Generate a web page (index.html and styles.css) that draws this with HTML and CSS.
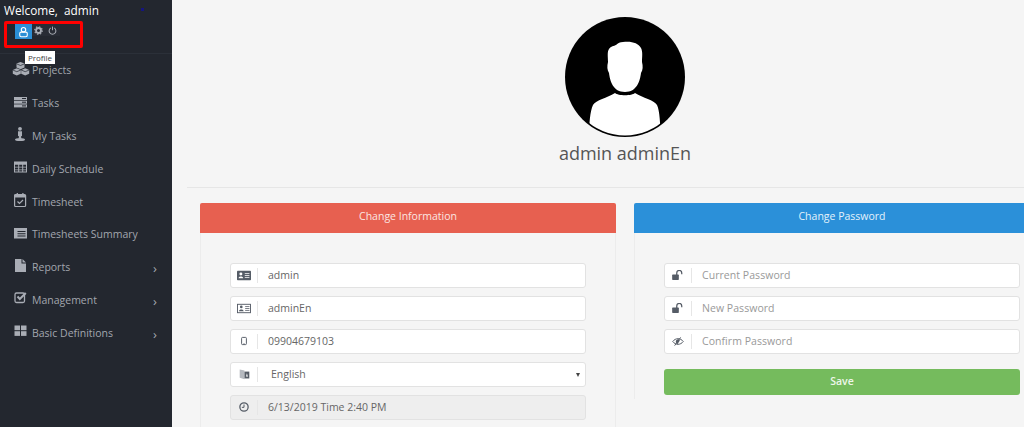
FILE: index.html
```html
<!DOCTYPE html>
<html lang="en">
<head>
<meta charset="utf-8">
<title>Profile</title>
<link rel="stylesheet" href="styles.css">
</head>
<body>
<div class="app">
  <aside class="sidebar">
    <div class="welcome">Welcome,&nbsp; admin</div>
    <span class="dot"></span>
    <div class="tools">
      <span class="tool active"><svg viewBox="0 0 16 16" width="11" height="12"><circle cx="8" cy="4.6" r="3.2" fill="none" stroke="#fff" stroke-width="1.6"/><rect x="2.5" y="8.2" width="11" height="6.6" rx="2" fill="none" stroke="#fff" stroke-width="1.6"/></svg></span>
      <span class="tool gear"><svg viewBox="0 0 16 16" width="9" height="9"><circle cx="8" cy="8" r="4.4" fill="none" stroke="#a9adb5" stroke-width="3.4"/><circle cx="8" cy="8" r="6.8" fill="none" stroke="#a9adb5" stroke-width="2" stroke-dasharray="2.6 2.7"/></svg></span>
      <span class="tool power"><svg viewBox="0 0 16 16" width="9" height="9"><path d="M5 3.4a6 6 0 1 0 6 0" fill="none" stroke="#a9adb5" stroke-width="1.800"/><path d="M8 1v6.5" stroke="#a9adb5" stroke-width="1.800"/></svg></span>
    </div>
    <nav class="menu">
      <a class="item"><svg class="ico" viewBox="0 0 18 16"><path d="M7.500 0l4 1.600v3.800l-4 1.800-4-1.800V1.600z"/><path d="M3.800 6.200l4 1.700v3.900l-4 1.800-4-1.800V7.900z"/><path d="M12.200 6.200l4 1.700v3.900l-4 1.800-4-1.800V7.900z"/><path d="M3.500 1.800l4 1.700 4-1.700M-.2 8l4 1.700 4-1.700M8.200 8l4 1.700 4-1.700" fill="none" stroke="#23272f" stroke-width=".7"/></svg><span class="label">Projects</span></a>
      <a class="item"><svg class="ico" viewBox="0 0 18 16"><rect x="1" y="2" width="13" height="3"/><rect x="1" y="5.700" width="13" height="3"/><rect x="1" y="9.400" width="13" height="3"/><rect x="9" y="3" width="4" height="1" fill="#23272f"/><rect x="9" y="6.700" width="4" height="1" fill="#23272f"/><rect x="9" y="10.400" width="4" height="1" fill="#23272f"/></svg><span class="label">Tasks</span></a>
      <a class="item"><svg class="ico" viewBox="0 0 18 16"><circle cx="7" cy="1.800" r="1.900"/><path d="M5 4.300h4V9H8.200v3H5.800V9H5z"/><ellipse cx="7" cy="12.500" rx="5" ry="1.600"/></svg><span class="label">My Tasks</span></a>
      <a class="item"><svg class="ico" viewBox="0 0 18 16"><path fill-rule="evenodd" d="M1 1.500h13v11H1zM2 4.700v2h3.200v-2zm4.200 0v2h3v-2zm4 0v2h2.800v-2zM2 7.500v2h3.200v-2zm4.200 0v2h3v-2zm4 0v2h2.800v-2zM2 10.300v1.300h3.200v-1.300zm4.200 0v1.300h3v-1.300zm4 0v1.300h2.800v-1.300z"/></svg><span class="label">Daily Schedule</span></a>
      <a class="item"><svg class="ico" viewBox="0 0 18 16"><rect x="1.600" y="1.500" width="11" height="12" rx="1" fill="none" stroke="#a9adb5" stroke-width="1.200"/><path d="M1.600 2h11v2.500h-11z"/><path d="M4.300 0v2.800M9.900 0v2.800" stroke="#a9adb5" stroke-width="1.300"/><path d="M4.500 8.500l2 2 3.500-3.500" fill="none" stroke="#a9adb5" stroke-width="1.200"/></svg><span class="label">Timesheet</span></a>
      <a class="item"><svg class="ico" viewBox="0 0 18 16"><path fill-rule="evenodd" d="M1 2h13v10.500H1zM4.500 5v1h8V5zm0 2.200v1h8v-1zm0 2.200v1h8v-1z"/></svg><span class="label">Timesheets Summary</span></a>
      <a class="item"><svg class="ico" viewBox="0 0 18 16"><path d="M2 0h6.500v4.500H13V13H2zM9.500 0L13 3.500H9.500z"/></svg><span class="label">Reports</span><span class="chev">›</span></a>
      <a class="item"><svg class="ico" viewBox="0 0 18 16"><rect x="2" y="2" width="9.500" height="9.500" rx="1.500" fill="none" stroke="#a9adb5" stroke-width="1.300"/><path d="M4.500 5.500l2.300 2.500 6-6" fill="none" stroke="#a9adb5" stroke-width="2"/></svg><span class="label">Management</span><span class="chev">›</span></a>
      <a class="item"><svg class="ico" viewBox="0 0 18 16"><rect x="1.500" y="1.500" width="5.500" height="4.700"/><rect x="8" y="1.500" width="5.500" height="4.700"/><rect x="1.500" y="7.200" width="5.500" height="4.700"/><rect x="8" y="7.200" width="5.500" height="4.700"/></svg><span class="label">Basic Definitions</span><span class="chev">›</span></a>
    </nav>
    <div class="highlight"></div>
    <div class="tip">Profile</div>
  </aside>
  <main class="main">
    <header class="head">
      <svg class="avatar" viewBox="0 0 120 120">
        <defs><clipPath id="inner"><circle cx="60" cy="60" r="58.500"/></clipPath></defs>
        <circle cx="60" cy="60" r="60" fill="#000"/>
        <g clip-path="url(#inner)">
          <path fill="#fff" d="M24 120c0-12 1-26 4-32 3-5 14-7 22-12 3 3 17 3 20 0 8 5 19 7 22 12 3 6 3 20 4 32z"/>
          <path fill="none" stroke="#000" stroke-width="1.500" d="M48 71c3 3 7 5 12 5s9-2 12-5"/>
          <path fill="#fff" d="M58 25c9-1 15 1 18 6 2 4 1 9 1 14 1 4 1 8-1 11-1 8-4 19-16 19s-15-11-16-19c-2-3-2-7-1-11 0-5-1-10 1-13 2-3 5-3 7-4 2-2 4-3 7-3z"/>
        </g>
      </svg>
      <h1 class="name">admin adminEn</h1>
    </header>
    <hr class="rule">
    <div class="cards">
      <section class="card">
        <h2 class="card-title red">Change Information</h2>
        <div class="card-body">
          <div class="field"><span class="addon"><svg viewBox="0 0 18 14" width="14" height="11"><rect y="1" width="18" height="12" rx="1" fill="#555c66"/><circle cx="5" cy="5.200" r="1.900" fill="#fff"/><path d="M2 10.500c0-3 6-3 6 0z" fill="#fff"/><path d="M10 4.500h6M10 7h6M10 9.500h6" stroke="#fff"/></svg></span><span class="value">admin</span></div>
          <div class="field"><span class="addon"><svg viewBox="0 0 18 14" width="14" height="11"><rect x=".6" y="1.600" width="16.800" height="10.800" fill="none" stroke="#555c66" stroke-width="1.200"/><circle cx="5.500" cy="5" r="1.700" fill="#555c66"/><path d="M2.500 10.500c0-3 6-3 6 0z" fill="#555c66"/><path d="M10.500 4.500h5.500M10.500 7h5.500M10.500 9.500h5.500" stroke="#555c66"/></svg></span><span class="value">adminEn</span></div>
          <div class="field"><span class="addon"><svg viewBox="0 0 10 14" width="6" height="10"><rect x="1" y="1" width="8" height="12" rx="1.500" fill="none" stroke="#555c66" stroke-width="1.600"/><path d="M4 11.300h2" stroke="#555c66"/></svg></span><span class="value">09904679103</span></div>
          <div class="field"><span class="addon"><svg viewBox="0 0 16 16" width="11" height="12"><path fill="#b5b9bf" d="M1 1.500l7 1.500v12.500l-7-2z"/><path fill="#555c66" d="M8 4.500h7v10H8z"/><path fill="#fff" d="M10 12l1.500-5 1.500 5h-1l-.5-1.500-.5 1.500z"/></svg></span><span class="value select">English</span><span class="caret"></span></div>
          <div class="field off"><span class="addon"><svg viewBox="0 0 14 14" width="10" height="10"><circle cx="7" cy="7" r="5.800" fill="none" stroke="#555c66" stroke-width="1.800"/><path d="M7 3.500V7.500H4" fill="none" stroke="#555c66" stroke-width="1.400"/></svg></span><span class="value">6/13/2019 Time 2:40 PM</span></div>
        </div>
      </section>
      <section class="card short">
        <h2 class="card-title blue">Change Password</h2>
        <div class="card-body">
          <div class="field"><span class="addon"><svg viewBox="0 0 14 12" width="12" height="10"><rect x="0" y="5.500" width="8" height="6.500" rx=".8" fill="#555c66"/><path d="M5.500 6V3.500a3 3 0 0 1 6 0V5" fill="none" stroke="#555c66" stroke-width="1.500"/></svg></span><span class="value hint">Current Password</span></div>
          <div class="field"><span class="addon"><svg viewBox="0 0 14 12" width="12" height="10"><rect x="0" y="5.500" width="8" height="6.500" rx=".8" fill="#555c66"/><path d="M5.500 6V3.500a3 3 0 0 1 6 0V5" fill="none" stroke="#555c66" stroke-width="1.500"/></svg></span><span class="value hint">New Password</span></div>
          <div class="field"><span class="addon"><svg viewBox="0 0 16 12" width="12" height="9"><path d="M1 6c3.500-5 10.500-5 14 0-3.500 5-10.500 5-14 0z" fill="none" stroke="#555c66" stroke-width="1.300"/><path d="M5 6.500a3 3 0 0 1 5.500-2L7 10z" fill="#555c66"/><path d="M3.500 11.500l8-11" stroke="#555c66" stroke-width="1.300"/></svg></span><span class="value hint">Confirm Password</span></div>
          <button class="save" type="button">Save</button>
        </div>
      </section>
    </div>
  </main>
</div>
</body>
</html>
```
FILE: styles.css
```css
* { box-sizing: border-box; }
html, body { margin: 0; height: 427px; overflow: hidden; }
body { font-family: "Open Sans", "Noto Sans", sans-serif; background: #f5f5f5; color: #666; }
.app { display: flex; height: 427px; width: 1024px; overflow: hidden; }

.sidebar { position: relative; flex: 0 0 172px; background: #23272f; color: #a9adb5; }
.welcome { padding: 2px 0 0 4px; height: 20px; font-size: 11.800px; line-height: 17px; color: #fff; white-space: nowrap; }
.dot { position: absolute; left: 141px; top: 8px; width: 3px; height: 3px; background: #15157f; }
.tools { display: flex; height: 34px; margin-left: 15px; padding-top: 4px; align-items: flex-start; }
.tool { height: 12px; display: flex; justify-content: center; align-items: center; background: #282c35; }
.tool.active { width: 17px; height: 15px; background: #2b8fd6; }
.tool.gear { width: 13px; }
.tool.power { width: 15px; }
.menu { display: flex; flex-direction: column; border-top: 1px solid #2b3039; margin-top: -1px; }
.item { display: flex; align-items: center; height: 32.800px; padding-left: 13px; font-size: 10.500px; color: #a2a6ae; white-space: nowrap; }
.ico { width: 18px; height: 16px; fill: #a9adb5; flex: none; margin-top: -1px; overflow: visible; }
.label { margin-left: 1px; }
.chev { margin-left: auto; margin-right: 15px; font-size: 13px; line-height: 13px; margin-top: 3px; }
.highlight { position: absolute; left: 4px; top: 21px; width: 79px; height: 27px; border: 3px solid #f00; border-radius: 2px; }
.tip { position: absolute; left: 25px; top: 51px; width: 30px; height: 13px; background: #fff; color: #444; font-size: 8px; line-height: 13px; text-align: center; }

.main { flex: 1 0 852px; padding: 0 0 0 15px; min-width: 0; }
.head { display: flex; flex-direction: column; align-items: center; padding: 17px 0 0 54px; margin-left: -15px; }
.avatar { width: 120px; height: 120px; display: block; }
.name { margin: 4px 0 0; font-size: 18px; font-weight: 400; line-height: 24px; color: #555; }
.rule { margin: 22px 0 15px; border: 0; border-top: 1px solid #e6e6e6; }
.cards { display: flex; gap: 18px; padding-left: 13px; width: 920px; }
.card { flex: 0 0 416px; height: 240px; }
.card.short { height: 196px; }
.card-title { margin: 0; height: 30px; font-size: 10.500px; font-weight: 400; line-height: 27px; text-align: center; color: #fff; border-radius: 2px 2px 0 0; }
.card-title.red { background: #e76050; color: #fbe6e2; }
.card-title.blue { background: #2b90d9; color: #e4f2fb; }
.card-body { padding: 30px 29px 0 29px; height: calc(100% - 30px); border: 1px solid #ececec; border-top: 0; border-bottom: 0; display: flex; flex-direction: column; gap: 8px; }
.field { position: relative; display: flex; align-items: center; height: 25px; background: #fff; border: 1px solid #e2e2e2; border-radius: 3px; font-size: 10.500px; flex: none; }
.field.off { background: #eeeeee; }
.addon { flex: 0 0 27px; height: 15px; border-right: 1px solid #e6e6e6; display: flex; align-items: center; justify-content: center; margin-top: -1px; }
.value { padding-left: 10px; color: #666; margin-top: -1px; }
.value.select { padding-left: 13px; }
.value.hint { color: #999; letter-spacing: .05px; }
.caret { position: absolute; right: 5px; top: 10px; width: 0; height: 0; border: 2.500px solid transparent; border-top: 4px solid #444; border-bottom: 0; }
.save { margin-top: 7px; height: 26px; flex: none; background: #75bb5d; border: 0; border-radius: 3px; color: #eef7ea; font: 600 10.500px "Open Sans", sans-serif; padding: 0 0 2px; }
```
